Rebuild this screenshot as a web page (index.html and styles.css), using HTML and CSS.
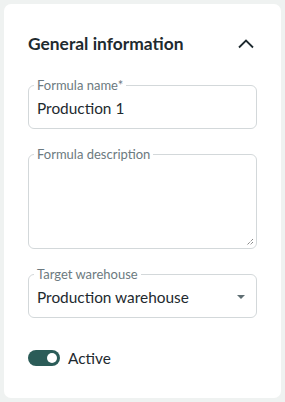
FILE: index.html
```html
<!DOCTYPE html>
<html>
<head>
<meta charset="utf-8">
<link rel="stylesheet" href="styles.css">
</head>
<body>
<section class="card">
  <header class="card-header">
    <h2 class="title">General information</h2>
    <button class="collapse" aria-label="Collapse">
      <svg width="24" height="24" viewBox="0 0 24 24"><path d="M5 15.5l7-7 7 7" fill="none" stroke="#1e2a2f" stroke-width="1.8"/></svg>
    </button>
  </header>
  <div class="fields">
    <fieldset class="field">
      <legend class="label">Formula name*</legend>
      <div class="value">Production 1</div>
    </fieldset>
    <fieldset class="field">
      <legend class="label">Formula description</legend>
      <div class="textarea">
        <svg class="grip" width="8" height="8" viewBox="0 0 8 8"><path d="M7 1L1 7M7 4L4 7" stroke="#555" stroke-width="1" stroke-dasharray="1 1"/></svg>
      </div>
    </fieldset>
    <fieldset class="field">
      <legend class="label">Target warehouse</legend>
      <div class="value select">
        <span>Production warehouse</span>
        <svg width="8" height="4" viewBox="0 0 8 4"><path d="M0 0h8L4 4z" fill="#5f6e73"/></svg>
      </div>
    </fieldset>
  </div>
  <label class="toggle-row">
    <span class="toggle"><span class="knob"></span></span>
    <span class="toggle-label">Active</span>
  </label>
</section>
</body>
</html>
```

FILE: styles.css
```css
* { box-sizing: border-box; }
html, body { margin: 0; }
body {
  background: #eff2f1;
  font-family: Lato, "Noto Sans", sans-serif;
  color: #1e2a2f;
  padding: 4px;
  height: 402px;
}
.card {
  background: #fff;
  border-radius: 7px;
  padding: 28px 24px 31px;
  height: 394px;
}
.card-header {
  display: flex;
  align-items: center;
  justify-content: space-between;
  height: 24px;
}
.title {
  margin: 0;
  font-size: 17.4px;
  font-weight: 700;
  line-height: 24px;
}
.collapse {
  border: 0;
  background: none;
  padding: 0;
  width: 24px;
  height: 24px;
  margin-right: -1px;
}
.collapse svg { display: block; }
.fields {
  display: flex;
  flex-direction: column;
  gap: 17px;
  margin-top: 21px;
}
.field {
  margin: 0;
  border: 1px solid #d3d8da;
  border-radius: 6px;
  padding: 0 8px;
  min-width: 0;
}
.label {
  font-size: 13px;
  line-height: 16px;
  color: #6c7a80;
  padding: 0 3px;
  margin-left: -3px;
}
.value {
  font-size: 15.4px;
  line-height: 24px;
  padding: 3px 0 8px;
}
.select {
  display: flex;
  align-items: center;
  justify-content: space-between;
}
.select svg { margin-right: 3px; }
.textarea {
  height: 86px;
  position: relative;
}
.grip {
  position: absolute;
  right: -6px;
  bottom: 2px;
}
.toggle-row {
  display: flex;
  align-items: center;
  gap: 8px;
  margin-top: 30px;
  font-size: 15.4px;
}
.toggle {
  width: 32px;
  height: 16px;
  border-radius: 8px;
  background: #2b5c58;
  display: flex;
  align-items: center;
  justify-content: flex-end;
  padding-right: 3px;
}
.knob {
  width: 10px;
  height: 10px;
  border-radius: 50%;
  background: #fff;
}
.toggle-label { line-height: 20px; }
```
